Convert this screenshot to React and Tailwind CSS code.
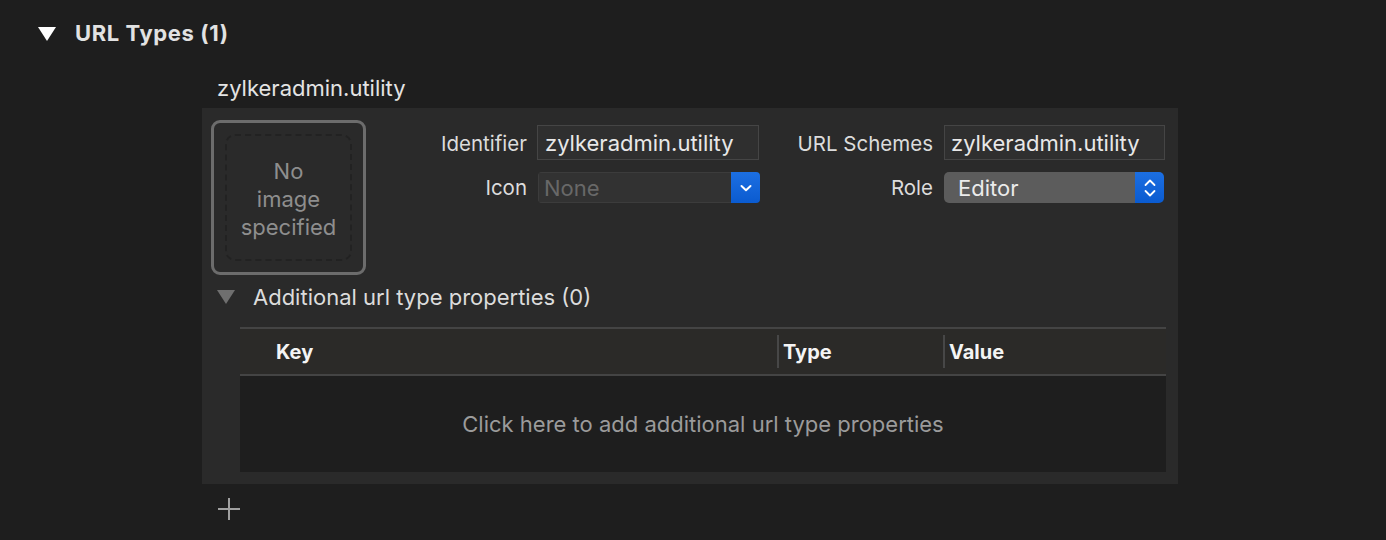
import React from "react";

const font = { fontFamily: "Inter, 'Noto Sans', sans-serif" };

function Chevron() {
  return (
    <svg width="14" height="10" viewBox="0 0 14 10">
      <path d="M2.5 3 L7 7.2 L11.5 3" fill="none" stroke="white" strokeWidth="2" strokeLinecap="round" strokeLinejoin="round" />
    </svg>
  );
}

function Stepper() {
  return (
    <svg width="14" height="22" viewBox="0 0 14 22">
      <path d="M2.5 8 L7 3.5 L11.5 8" fill="none" stroke="white" strokeWidth="1.8" strokeLinecap="round" strokeLinejoin="round" />
      <path d="M2.5 14 L7 18.5 L11.5 14" fill="none" stroke="white" strokeWidth="1.8" strokeLinecap="round" strokeLinejoin="round" />
    </svg>
  );
}

export default function App() {
  return (
    <div className="w-[1386px] h-[540px] bg-[#1e1e1e] text-[#dedede] overflow-hidden" style={font}>
      {/* Section header */}
      <div className="flex items-center h-[30px] mt-[18px] pl-[38px]">
        <svg width="18" height="14" viewBox="0 0 18 14" className="mt-[1px]">
          <path d="M0 0 H18 L9 14 Z" fill="#ffffff" />
        </svg>
        <span className="ml-[19px] text-[22px] font-bold text-[#e2e2e2] tracking-[0.6px]">URL Types (1)</span>
      </div>

      <div className="ml-[202px] w-[976px]">
        <div className="h-[28px] mt-[26px] flex items-center pl-[15px] text-[22px] text-[#e4e4e4]">zylkeradmin.utility</div>
        <div className="mt-[6px] bg-[#2a2a2a] h-[376px] flex flex-col">
          <div className="flex">
            {/* image well */}
            <div className="ml-[9px] mt-[12px] w-[155px] h-[155px] rounded-[9px] border-[3px] border-[#6c6c6c] p-[11px]">
              <div className="w-full h-full rounded-[10px] border-[2px] border-dashed border-[#222222] flex items-center justify-center text-center text-[22px] leading-[28px] text-[#8e8e8e]">
                <div className="mt-[2px]">No<br />image<br />specified</div>
              </div>
            </div>
            {/* form */}
            <div className="flex flex-col mt-[17px]">
              <div className="flex items-center h-[35px]">
                <div className="w-[161px] text-right text-[20.5px] text-[#dcdcdc] mt-[3px]">Identifier</div>
                <div className="ml-[10px] w-[222px] h-[35px] bg-[#2f2f2f] border border-[#454545] flex items-center pl-[7px] pt-[2px] text-[22px] text-[#e8e8e8]">zylkeradmin.utility</div>
                <div className="w-[174px] text-right text-[20.5px] text-[#dcdcdc] mt-[3px]">URL Schemes</div>
                <div className="ml-[11px] w-[221px] h-[35px] bg-[#2f2f2f] border border-[#454545] flex items-center pl-[6px] pt-[2px] text-[22px] text-[#e8e8e8]">zylkeradmin.utility</div>
              </div>
              <div className="flex items-center h-[31px] mt-[12px]">
                <div className="w-[161px] text-right text-[20.5px] text-[#dcdcdc] mt-[1px]">Icon</div>
                <div className="ml-[11px] w-[222px] h-[31px] flex rounded-[4px] overflow-hidden">
                  <div className="flex-1 bg-[#323232] border border-[#3c3c3c] border-r-0 flex items-center pl-[5px] pt-[1px] text-[22px] text-[#686868]">None</div>
                  <div className="w-[29px] bg-gradient-to-b from-[#1c6fe2] to-[#0a5bd0] flex items-center justify-center"><Chevron /></div>
                </div>
                <div className="ml-[-1px] w-[174px] text-right text-[20.5px] text-[#dcdcdc] mt-[1px]">Role</div>
                <div className="ml-[11px] w-[220px] h-[31px] flex rounded-[5px] overflow-hidden">
                  <div className="flex-1 bg-[#5c5c5c] flex items-center pl-[14px] pt-[1px] text-[22px] text-[#ebebeb]">Editor</div>
                  <div className="w-[29px] bg-gradient-to-b from-[#1c6fe2] to-[#0a5bd0] flex items-center justify-center"><Stepper /></div>
                </div>
              </div>
            </div>
          </div>

          {/* additional properties */}
          <div className="flex items-center h-[30px] mt-[7px] pl-[15px]">
            <svg width="18" height="14" viewBox="0 0 18 14">
              <path d="M0 0 H18 L9 14 Z" fill="#6f6f6f" />
            </svg>
            <span className="ml-[18px] text-[22px] text-[#dcdcdc]">Additional url type properties (0)</span>
          </div>

          <div className="ml-[38px] mt-[15px] w-[926px]">
            <div className="h-[49px] bg-[#2b2a28] border-t-[2px] border-b-[2px] border-[#444444] flex items-center text-[20px] font-bold text-[#f4f4f4]">
              <div className="w-[537px] pl-[36px]">Key</div>
              <div className="w-[2px] h-[33px] bg-[#474747]"></div>
              <div className="w-[164px] pl-[4px]">Type</div>
              <div className="w-[2px] h-[33px] bg-[#474747]"></div>
              <div className="pl-[4px]">Value</div>
            </div>
            <div className="h-[96px] bg-[#1e1e1e] flex items-center justify-center text-[22px] text-[#9b9b9b]">
              Click here to add additional url type properties
            </div>
          </div>
        </div>

        <div className="mt-[14px] ml-[16px] w-[22px] h-[22px] relative">
          <div className="absolute left-[10px] top-0 w-[2px] h-[22px] bg-[#a0a0a0]"></div>
          <div className="absolute top-[10px] left-0 h-[2px] w-[22px] bg-[#a0a0a0]"></div>
        </div>
      </div>
    </div>
  );
}
